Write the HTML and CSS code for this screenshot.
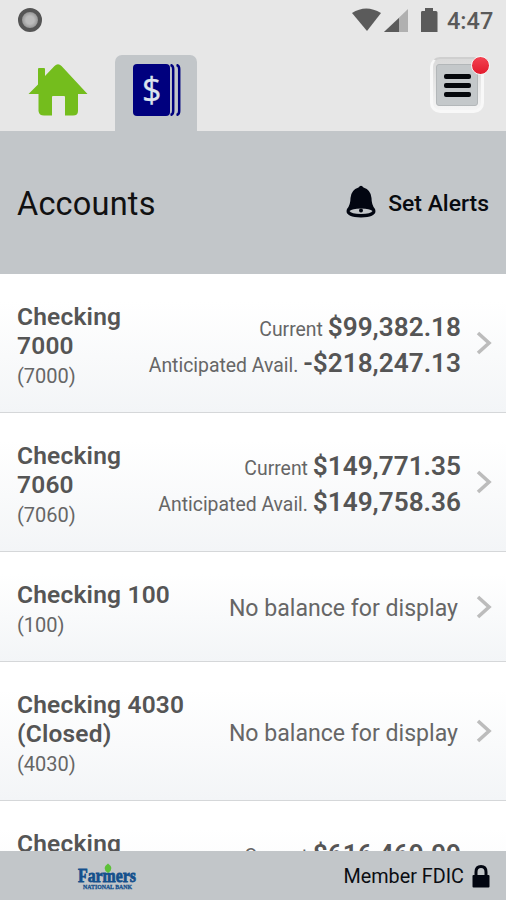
FILE: index.html
```html
<!DOCTYPE html>
<html lang="en">
<head>
<meta charset="utf-8">
<title>Accounts</title>
<link rel="stylesheet" href="styles.css">
</head>
<body>
<div class="app">
  <header class="top">
    <div class="status">
      <span class="record"></span>
      <svg class="signals" width="90" height="26" viewBox="0 0 90 26">
        <path d="M1 5Q15-4 30 5L16 23Z"/>
        <path class="faint" d="M57 1V24H33Z"/>
        <path d="M48 10V24H33Z"/>
        <path d="M71 3h3V0h8v3h3q1.500 0 1.500 1.500V24H70V4.500Q70 3 71 3Z"/>
      </svg>
      <span class="clock">4:47</span>
    </div>
    <nav class="tabs">
      <svg class="home" width="60" height="52" viewBox="0 0 60 52">
        <path d="M0.500 30L10 20.500V5q0-1 1-1h5q1 0 1 1v7L26.500 2q3.500-3.500 7 0L59.500 30H50V47q0 4.500-5 4.500H37V33q0-1-1-1H25q-1 0-1 1V51.500H16q-5 0-5.500-4.500V30Z"/>
      </svg>
      <div class="tab">
        <svg width="48" height="52" viewBox="0 0 48 52">
          <rect x="0" y="0" width="37" height="52" rx="4"/>
          <path class="sheet" d="M37.500 1Q40.200 1.500 40.200 5V47Q40.200 50.500 37.500 51M43.500 1Q46.200 1.500 46.200 5V47Q46.200 50.500 43.500 51"/>
          <text x="9" y="37.500">$</text>
        </svg>
      </div>
      <button class="menu" aria-label="Menu"><span class="face"><i></i><i></i><i></i></span><span class="badge"></span></button>
    </nav>
  </header>
  <section class="title">
    <h1>Accounts</h1>
    <div class="alerts">
      <svg width="30" height="33" viewBox="0 0 30 33">
        <path d="M12.500 2.500Q15-1 17.500 2.500Q25 5 25.500 13Q25.500 20 29 24Q32 32 15 32.500Q-2 32 1 24Q4.500 20 4.500 13Q5 5 12.500 2.500Z"/>
        <path class="rim" d="M3.500 26Q6 23.500 15 23.500T26.500 26Q25 29 15 29T3.500 26Z"/>
        <circle cx="15" cy="25.500" r="2"/>
      </svg>
      <span>Set Alerts</span>
    </div>
  </section>
  <main class="list">
    <article class="row">
      <div class="account"><h2>Checking<br>7000</h2><p>(7000)</p></div>
      <div class="balance"><p>Current <b>$99,382.18</b></p><p>Anticipated Avail. <b>-$218,247.13</b></p></div>
      <svg class="chevron" width="16" height="24" viewBox="0 0 16 24"><path d="M2 2L13 12L2 22"/></svg>
    </article>
    <article class="row">
      <div class="account"><h2>Checking<br>7060</h2><p>(7060)</p></div>
      <div class="balance"><p>Current <b>$149,771.35</b></p><p>Anticipated Avail. <b>$149,758.36</b></p></div>
      <svg class="chevron" width="16" height="24" viewBox="0 0 16 24"><path d="M2 2L13 12L2 22"/></svg>
    </article>
    <article class="row">
      <div class="account"><h2>Checking 100</h2><p>(100)</p></div>
      <div class="balance none">No balance for display</div>
      <svg class="chevron" width="16" height="24" viewBox="0 0 16 24"><path d="M2 2L13 12L2 22"/></svg>
    </article>
    <article class="row">
      <div class="account"><h2>Checking 4030<br>(Closed)</h2><p>(4030)</p></div>
      <div class="balance none">No balance for display</div>
      <svg class="chevron" width="16" height="24" viewBox="0 0 16 24"><path d="M2 2L13 12L2 22"/></svg>
    </article>
    <article class="row">
      <div class="account"><h2>Checking<br>&nbsp;</h2><p>&nbsp;</p></div>
      <div class="balance"><p>Current <b>$616,469.09</b></p><p>&nbsp;</p></div>
      <svg class="chevron" width="16" height="24" viewBox="0 0 16 24"><path d="M2 2L13 12L2 22"/></svg>
    </article>
  </main>
  <footer class="foot">
    <svg class="logo" width="62" height="28" viewBox="0 0 62 28">
      <text class="brand" x="1" y="19" textLength="58" lengthAdjust="spacingAndGlyphs">Farmers</text>
      <text class="sub" x="6" y="25.500" textLength="49" lengthAdjust="spacingAndGlyphs">NATIONAL BANK</text>
      <path d="M31 0.500Q38 5.500 31 10Q24 5.500 31 0.500Z"/>
    </svg>
    <div class="member">
      <span>Member FDIC</span>
      <svg width="18" height="23" viewBox="0 0 18 23">
        <path class="shackle" d="M4 11V7Q4 1.500 9 1.500T14 7V11"/>
        <rect x="0.500" y="10" width="17" height="12.500" rx="1"/>
      </svg>
    </div>
  </footer>
</div>
</body>
</html>
```

FILE: styles.css
```css
* { box-sizing: border-box; }
body { margin: 0; font-family: Roboto, "Liberation Sans", sans-serif; }
h1, h2, p { margin: 0; }
svg { display: block; flex: none; }

.app { width: 506px; height: 900px; display: flex; flex-direction: column; overflow: hidden; background: #fff; }

.top { height: 131px; flex: none; background: #e7e7e7; display: flex; flex-direction: column; }
.status { height: 55px; display: flex; align-items: flex-start; padding: 8px 13px 0 18px; }
.record { width: 24px; height: 24px; border-radius: 50%; border: 4px solid #555; background: radial-gradient(#bbb 35%, #929292 75%); }
.signals { margin-left: auto; fill: #5b5b5b; }
.signals .faint { fill: #b0b0b0; }
.clock { width: 46px; margin-left: 6px; font-size: 23.500px; line-height: 26px; font-weight: 500; color: #5a5a5a; }

.tabs { flex: 1; display: flex; align-items: flex-start; padding-left: 28px; }
.home { margin-top: 9px; fill: #74bd1d; }
.tab { width: 82px; height: 76px; margin-left: 27px; padding: 9px 0 0 18px; border-radius: 7px 7px 0 0; background: #c2c6c9; }
.tab svg { fill: #00007e; }
.tab .sheet { fill: none; stroke: #00007e; stroke-width: 2.500; }
.tab text { font: 34px "Open Sans", sans-serif; fill: #dce3ed; stroke: #dce3ed; stroke-width: 0.300; }

.menu { position: relative; width: 54px; height: 56px; margin: 2px 22px 0 auto; padding: 5px 3px 4px; border: 3px solid #f8f8f8; border-top: 2px solid #cfcfcf; border-radius: 10px; background: linear-gradient(#dadada, #f4f4f4); }
.face { display: flex; flex-direction: column; align-items: center; justify-content: center; gap: 4px; width: 42px; height: 42px; border: 1px solid #b3b7b9; border-radius: 3px; background: #c4c8ca; }
.face i { width: 27px; height: 5px; border-radius: 2px; background: #05070b; }
.badge { position: absolute; right: -9px; top: -3px; width: 19px; height: 19px; border: 1.500px solid #f6f6f6; border-radius: 50%; background: linear-gradient(#f34352, #e21b2d); }

.title { height: 143px; flex: none; padding: 1px 17px 0 17px; display: flex; align-items: center; justify-content: space-between; background: #c2c6c9; }
.title h1 { font-size: 32.500px; font-weight: 400; color: #111; letter-spacing: 0.200px; padding-top: 1px; }
.alerts { display: flex; align-items: center; gap: 12px; font-size: 22.900px; font-weight: 500; color: #080b10; }
.alerts svg { margin-top: -3px; fill: #020611; }
.alerts .rim { fill: #c2c6c9; }

.list { flex: 1; min-height: 0; overflow: hidden; }
.row { display: flex; align-items: center; padding: 28px 14px 24px 17px; border-bottom: 2px solid #d5d7d9; margin-bottom: -1px; background: linear-gradient(#fff 20%, #f3f5f7); color: #555; }
.account h2 { font-size: 24.500px; letter-spacing: 0.200px; line-height: 29px; font-weight: 600; white-space: nowrap; }
.account p { margin-top: 4px; font-size: 20px; line-height: 24px; color: #666; }
.balance { flex: 1; text-align: right; margin-right: 15px; padding-top: 6px; font-size: 19.400px; line-height: 36px; color: #666; white-space: nowrap; }
.balance p { height: 36px; }
.balance b { font-size: 26.200px; line-height: 20px; font-weight: 600; color: #555; }
.balance.none { margin-right: 18px; padding: 1px 0 0; font-size: 23.100px; }
.chevron { margin-bottom: 4px; fill: none; stroke: #bcbcbc; stroke-width: 3.600; }

.foot { height: 49px; flex: none; padding: 2px 16px 0 77px; display: flex; align-items: center; justify-content: space-between; background: #c2c6c9; }
.brand { font: bold 19px "Liberation Serif", serif; fill: #14508c; stroke: #14508c; stroke-width: 0.800; }
.sub { font: bold 6.500px "Liberation Serif", serif; fill: #14508c; stroke: #14508c; stroke-width: 0.300; }
.logo path { fill: #5cc137; }
.member { display: flex; align-items: center; gap: 8px; font-size: 19.800px; color: #0b0d12; }
.member svg { fill: #020611; }
.shackle { fill: none; stroke: #020611; stroke-width: 3; }
```
